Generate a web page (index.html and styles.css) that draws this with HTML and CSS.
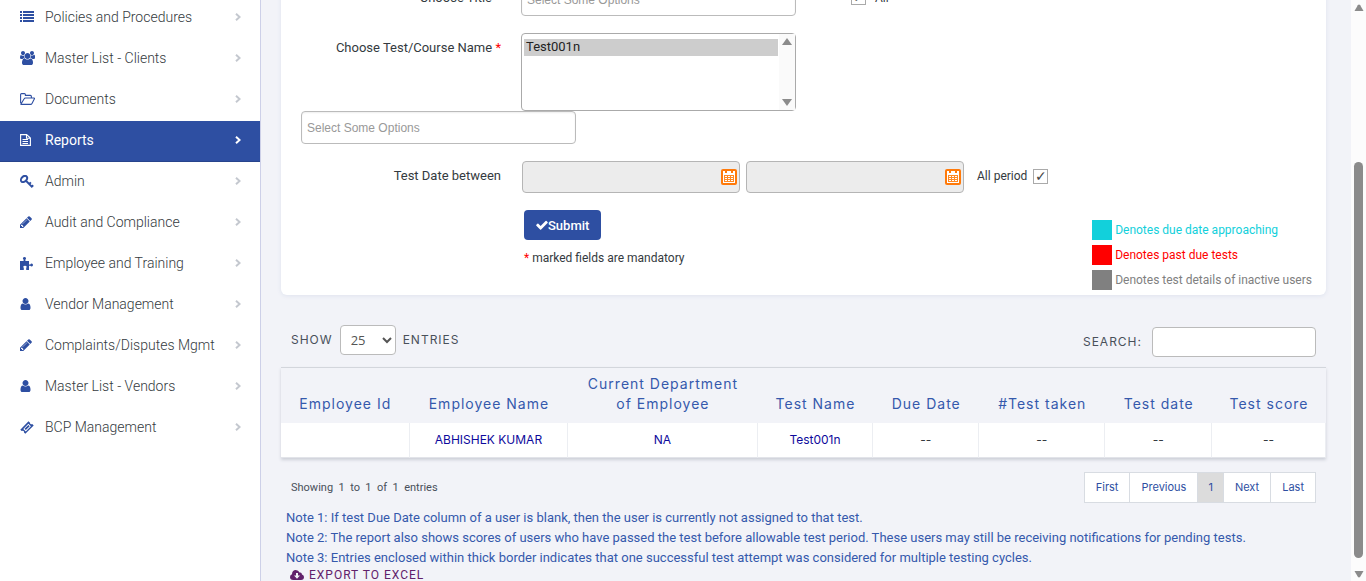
FILE: index.html
```html
<!DOCTYPE html>
<html lang="en">
<head>
<meta charset="utf-8">
<title>Reports</title>
<link rel="stylesheet" href="styles.css">
</head>
<body>
<svg class="sprite" aria-hidden="true">
  <symbol id="chevron" viewBox="0 0 6 8"><path d="M1 .8L4.600 4 1 7.200" fill="none" stroke="currentColor" stroke-width="2"/></symbol>
  <symbol id="pencil" viewBox="128 128 1536 1536"><path d="M491 1536l91-91-235-235-91 91v107h128v128h107zm523-928q0-22-22-22-10 0-17 7l-542 542q-7 7-7 17 0 22 22 22 10 0 17-7l542-542q7-7 7-17zm-54-192l416 416-832 832h-416v-416zm683 96q0 53-37 90l-166 166-416-416 166-165q36-38 90-38 53 0 91 38l235 234q37 39 37 91z"/></symbol>
  <symbol id="user" viewBox="256 128 1280 1536"><path d="M1536 1399q0 109-62.500 187t-150.500 78h-854q-88 0-150.500-78t-62.500-187q0-85 8.500-160.500t31.500-152 58.500-131 94-89 134.500-34.500q131 128 313 128t313-128q76 0 134.500 34.500t94 89 58.500 131 31.500 152 8.500 160.500zm-256-887q0 159-112.500 271.500t-271.500 112.500-271.500-112.500-112.500-271.500 112.500-271.500 271.500-112.500 271.500 112.500 112.500 271.500z"/></symbol>
  <symbol id="calendar" viewBox="0 0 16 16"><rect width="16" height="16" rx="2" fill="#ff7a0a"/><path d="M2 2h2v2h2V2h4v2h2V2h2v12H2z" fill="#fff"/><path d="M3 6h10v7H3z" fill="#ff8a24"/><path d="M4 7h2v1H4zm3 0h2v1H7zm3 0h2v1h-2zM4 9h2v1H4zm3 0h2v1H7zm3 0h2v1h-2zM4 11h2v1H4zm3 0h2v1H7zm3 0h2v1h-2z" fill="#fff"/></symbol>
</svg>
<div class="app">
  <nav class="sidebar">
    <a class="item" href="#"><span class="ico"><svg width="14" height="12" viewBox="0 0 14 12"><path d="M0 0h2v2H0zM3 0h11v2H3zM0 3h2v2H0zM3 3h11v2H3zM0 6h2v2H0zM3 6h11v2H3zM0 9h2v2H0zM3 9h11v2H3z"/></svg></span><span>Policies and Procedures</span><svg class="chev"><use href="#chevron"/></svg></a>
    <a class="item" href="#"><span class="ico"><svg width="15" height="14" viewBox="0 0 1920 1792"><path d="M593 896q-162 5-265 128h-134q-82 0-138-40.500t-56-118.500q0-353 124-353 6 0 43.500 21t97.500 42.500 119 21.500q67 0 133-23-5 37-5 66 0 159 93 286zm1071 637q0 120-73 189.500t-194 69.500h-874q-121 0-194-69.500t-73-189.500q0-53 3.500-103.500t14-109 26.500-108.500 43-97.500 62-81 85.500-53.500 111.500-20q10 0 43 21.500t73 48 107 48 135 21.500 135-21.500 107-48 73-48 43-21.500q61 0 111.500 20t85.500 53.500 62 81 43 97.500 26.500 108.500 14 109 3.500 103.500zm-1024-1277q0 106-75 181t-181 75-181-75-75-181 75-181 181-75 181 75 75 181zm704 384q0 159-112.500 271.500t-271.500 112.500-271.500-112.500-112.500-271.500 112.500-271.500 271.500-112.500 271.500 112.500 112.500 271.500zm576 225q0 78-56 118.500t-138 40.500h-134q-103-123-265-128 93-127 93-286 0-29-5-66 66 23 133 23 59 0 119-21.500t97.500-42.500 43.500-21q124 0 124 353zm-128-609q0 106-75 181t-181 75-181-75-75-181 75-181 181-75 181 75 75 181z"/></svg></span><span>Master List - Clients</span><svg class="chev"><use href="#chevron"/></svg></a>
    <a class="item" href="#"><span class="ico"><svg width="15" height="12" viewBox="0 0 15 12"><path d="M.6 10V1.600q0-1 1-1h2.800q1 0 1 1v.8h5q1 0 1 1V5M1 11l3-5q.5-1 1.500-1H14q.8 0 .3.900L12 10.400q-.5 1-1.500 1H1.600q-1 0-1-1" fill="none" stroke="currentColor" stroke-width="1.100"/></svg></span><span>Documents</span><svg class="chev"><use href="#chevron"/></svg></a>
    <a class="item active" href="#"><span class="ico"><svg width="11" height="12" viewBox="0 0 11 12"><path d="M.6.600h6L10.400 4v7.400H.6zM6.500.600V4.200h3.900M2.500 5.500h5.500M2.500 7.500h5.500M2.500 9.500h5.500" fill="none" stroke="currentColor" stroke-width="1.100"/></svg></span><span>Reports</span><svg class="chev"><use href="#chevron"/></svg></a>
    <a class="item" href="#"><span class="ico"><svg width="14" height="13" viewBox="0 0 14 13"><path d="M6.200 6l5.600 5.600 1.400-1.300M9.200 9l1.700-1.700" fill="none" stroke="currentColor" stroke-width="1.900"/><ellipse cx="4" cy="4" rx="3.600" ry="2.500" transform="rotate(-45 4 4)" fill="none" stroke="currentColor" stroke-width="1.900"/></svg></span><span>Admin</span><svg class="chev"><use href="#chevron"/></svg></a>
    <a class="item" href="#"><span class="ico"><svg width="12" height="12"><use href="#pencil"/></svg></span><span>Audit and Compliance</span><svg class="chev"><use href="#chevron"/></svg></a>
    <a class="item" href="#"><span class="ico"><svg width="13" height="13" viewBox="0 0 13 13"><path d="M0 4h3.600V2.600Q2.800 2 2.900 1.200 3.200 0 4.500 0T6 1.200Q6.200 2 5.400 2.600V4H9v3.400h1.300q.5-.8 1.400-.8 1.300.2 1.300 1.500t-1.300 1.500q-.9 0-1.400-.8H9V13H6.200v-2.200q.6-.5.4-1.200-.3-.8-1.600-.8t-1.700.8q-.2.700.5 1.200V13H0z"/></svg></span><span>Employee and Training</span><svg class="chev"><use href="#chevron"/></svg></a>
    <a class="item" href="#"><span class="ico"><svg width="11" height="12"><use href="#user"/></svg></span><span>Vendor Management</span><svg class="chev"><use href="#chevron"/></svg></a>
    <a class="item" href="#"><span class="ico"><svg width="12" height="12"><use href="#pencil"/></svg></span><span>Complaints/Disputes Mgmt</span><svg class="chev"><use href="#chevron"/></svg></a>
    <a class="item" href="#"><span class="ico"><svg width="11" height="12"><use href="#user"/></svg></span><span>Master List - Vendors</span><svg class="chev"><use href="#chevron"/></svg></a>
    <a class="item" href="#"><span class="ico"><svg width="14" height="13" viewBox="0 0 14 13"><path fill-rule="evenodd" d="M8.500.3L10 1.700Q9.900 3 11 3.200q.8.100 1.200-.2L13.700 4.500 5.300 12.700 4 11.400Q4.300 10 3 9.800q-.8-.1-1.300.3L.3 8.700zM8.400 2.800L3.300 7.900l2.500 2.500 5.100-5.100zM8.400 3.900l1.300 1.300-3.900 3.900-1.300-1.300z"/></svg></span><span>BCP Management</span><svg class="chev"><use href="#chevron"/></svg></a>
  </nav>
  <main class="content">
    <form class="panel" onsubmit="return false">
      <div class="row">
        <label class="label titled" for="title">Choose Title</label>
        <input class="box" id="title" type="text" placeholder="Select Some Options">
        <label class="all"><input class="tick" type="checkbox" checked> All</label>
      </div>
      <div class="row tests">
        <label class="label" for="test">Choose Test/Course Name <span class="req">*</span></label>
        <div class="list-wrap">
          <select class="list" id="test" multiple><option selected>Test001n</option></select>
          <div class="list-bar"><svg width="10" height="8" viewBox="0 0 10 8"><path d="M5 0l5 7H0z"/></svg><svg width="10" height="8" viewBox="0 0 10 8"><path d="M5 8l5-7H0z"/></svg></div>
        </div>
      </div>
      <input class="box" type="text" placeholder="Select Some Options" aria-label="Selected tests">
      <div class="row dates">
        <label class="label" for="from">Test Date between</label>
        <div class="date"><input id="from" type="text" disabled><svg><use href="#calendar"/></svg></div>
        <div class="date"><input type="text" disabled aria-label="End date"><svg><use href="#calendar"/></svg></div>
        <label class="period">All period <input class="tick" type="checkbox" checked></label>
      </div>
      <div class="bottom">
        <div class="actions">
          <button class="submit" type="submit"><svg width="12" height="12" viewBox="100 250 1600 1300"><path d="M1671 566q0 40-28 68l-724 724-136 136q-28 28-68 28t-68-28l-136-136-362-362q-28-28-28-68t28-68l136-136q28-28 68-28t68 28l294 295 656-657q28-28 68-28t68 28l136 136q28 28 28 68z"/></svg>Submit</button>
          <div class="hint"><span class="req">*</span> marked fields are mandatory</div>
        </div>
        <ul class="legend">
          <li class="near">Denotes due date approaching</li>
          <li class="past">Denotes past due tests</li>
          <li class="inactive">Denotes test details of inactive users</li>
        </ul>
      </div>
    </form>
    <div class="tools">
      <label class="length">SHOW <select><option>25</option></select> ENTRIES</label>
      <label class="search">SEARCH: <input type="text"></label>
    </div>
    <table class="grid">
      <colgroup><col class="c-id"><col class="c-name"><col class="c-dept"><col class="c-test"><col class="c-due"><col class="c-taken"><col class="c-date"><col class="c-score"></colgroup>
      <thead><tr><th>Employee Id</th><th>Employee Name</th><th>Current Department<br>of Employee</th><th>Test Name</th><th>Due Date</th><th>#Test taken</th><th>Test date</th><th>Test score</th></tr></thead>
      <tbody><tr><td></td><td><a href="#">ABHISHEK KUMAR</a></td><td><a href="#">NA</a></td><td><a href="#">Test001n</a></td><td>--</td><td>--</td><td>--</td><td>--</td></tr></tbody>
    </table>
    <div class="foot">
      <div class="info">Showing&nbsp; 1&nbsp; to&nbsp; 1&nbsp; of&nbsp; 1&nbsp; entries</div>
      <nav class="pages"><a href="#">First</a><a href="#">Previous</a><a class="current" href="#">1</a><a href="#">Next</a><a href="#">Last</a></nav>
    </div>
    <div class="notes">
      <p>Note 1: If test Due Date column of a user is blank, then the user is currently not assigned to that test.</p>
      <p>Note 2: The report also shows scores of users who have passed the test before allowable test period. These users may still be receiving notifications for pending tests.</p>
      <p>Note 3: Entries enclosed within thick border indicates that one successful test attempt was considered for multiple testing cycles.</p>
    </div>
    <a class="export" href="#"><svg width="14" height="10" viewBox="0 0 14 10"><path fill-rule="evenodd" d="M3.200 10Q0 9.800 0 7q0-2 2-2.800Q2 .2 5.800 0 8.500 0 9.500 2.500 11.800 2 12 4.500q2 .7 2 2.500 0 2.800-3 3zM6 3v2.500H4L7 8.700l3-3.200H8V3z"/></svg>EXPORT TO EXCEL</a>
  </main>
  <div class="scrollbar">
    <svg width="10" height="8" viewBox="0 0 10 8"><path d="M5 .5q.7 0 1.200.8L9.500 7h-9l3.300-5.700Q4.300.5 5 .5z"/></svg>
    <div class="thumb"></div>
    <svg width="10" height="8" viewBox="0 0 10 8"><path d="M5 7.500q-.7 0-1.200-.8L.5 1h9L6.200 6.700Q5.700 7.500 5 7.500z"/></svg>
  </div>
</div>
</body>
</html>
```
FILE: styles.css
```css
* { box-sizing: border-box; }
body { margin: 0; background: #f2f3f8; color: #343a40; font: 12px/20px Roboto, sans-serif; }
a { text-decoration: none; }
svg { fill: currentColor; flex: none; }
.sprite { display: none; }
.app { display: flex; height: 100vh; overflow: hidden; }

.sidebar { flex: none; width: 261px; margin-top: -2px; background: #fff; border-right: 1px solid #cdd0e8; }
.item { display: flex; align-items: center; height: 41px; padding: 0 19px 3px 20px; color: #343a40; font-size: 14px; font-weight: 300; }
.ico { display: flex; width: 25px; color: #2e4fa2; }
.chev { width: 6px; height: 8px; margin-left: auto; color: #c4c8cf; }
.item.active { padding-bottom: 2px; background: #2e4fa2; color: #fff; border-bottom: 1px solid #27448c; font-weight: 400; }
.item.active .ico, .item.active .chev { color: #fff; }

.content { flex: 1; min-width: 0; padding: 0 25px 0 20px; }
.panel { margin-top: -17px; padding: 0 14px 5px 20px; background: #fff; border-radius: 0 0 6px 6px; box-shadow: 0 1px 4px #dfe3ef; }
.row { display: flex; }
.label { width: 200px; margin-right: 20px; padding-top: 5px; text-align: right; font-size: 13px; }
.label.titled { padding-right: 9px; }
.req { color: #f00; }
.box { width: 275px; height: 33px; padding: 0 5px; border: 1px solid #bbb; border-radius: 4px; background: #fff; box-shadow: inset 0 1px 2px #eee; font: 12px "Liberation Sans", Arial, sans-serif; }
.box::placeholder { color: #999; }
.all { display: flex; gap: 9px; align-items: center; height: 29px; margin-left: 55px; }
.tests { margin-top: 17px; }
.list-wrap { position: relative; width: 275px; height: 78px; }
.list { display: block; width: 100%; height: 100%; padding: 5px 17px 0 2px; border: 1px solid #aaa; border-radius: 4px; background: #fff; overflow: hidden; font: 13px/17px Roboto, sans-serif; }
.list option { min-height: 17px; padding: 0 2px; background: #cdcdcd; color: #222; }
.list-bar { position: absolute; top: 1px; right: 1px; bottom: 1px; width: 16px; padding: 4px 3px; display: flex; flex-direction: column; justify-content: space-between; background: #fafafa; color: #8b8b8b; }
.dates { margin-top: 17px; }
.dates .label { margin-right: 21px; }
.date { position: relative; width: 218px; margin-right: 6px; }
.date input { display: block; width: 100%; height: 32px; border: 1px solid #b5b5b5; border-radius: 4px; background: #ececec; }
.date svg { position: absolute; top: 8px; right: 3px; width: 16px; height: 16px; }
.period { display: flex; gap: 6px; align-items: center; height: 30px; margin-left: 7px; }
.tick { appearance: none; width: 15px; height: 15px; margin: 0; border: 1px solid #aaa; background: #fff; color: #444; font: bold 14px/13px "DejaVu Sans", sans-serif; text-align: center; }
.tick:checked::after { content: "✓"; }
.bottom { display: flex; justify-content: space-between; margin-top: 17px; }
.actions { padding-left: 223px; }
.submit { display: flex; align-items: center; height: 30px; padding: 0 12px; border: 0; border-radius: 4px; background: #2e4fa2; color: #fff; font: 500 13px Roboto, sans-serif; }
.hint { margin-top: 8px; }
.legend { display: flex; flex-direction: column; gap: 5px; margin: 10px 0 0; padding: 0; list-style: none; }
.legend li { display: flex; gap: 3px; }
.legend li::before { content: ""; width: 20px; height: 20px; background: currentColor; }
.near { color: #12d0db; }
.past { color: #f00; }
.inactive { color: #808080; }

.tools { display: flex; justify-content: space-between; align-items: center; height: 72px; padding: 20px 10px 0; font: 12px/20px Inter, sans-serif; letter-spacing: 1px; color: #49505a; }
.tools label { display: flex; align-items: center; gap: 7px; }
.tools .length { padding-bottom: 2px; }
.tools .search { gap: 10px; padding-top: 2px; }
.tools select { width: 56px; height: 30px; padding: 0 0 0 6px; border: 1px solid #bbb; border-radius: 4px; background: #fff; color: #555; font: 13px "Open Sans", sans-serif; }
.tools input { width: 164px; height: 30px; border: 1px solid #bbb; border-radius: 4px; }

.grid { width: 100%; table-layout: fixed; border-collapse: separate; border-spacing: 0; border-top: 1px solid #d3d6dc; box-shadow: 0 2px 3px #cdd0d8; background: #fff; text-align: center; font: 12px/20px Inter, sans-serif; }
.c-id { width: 12.300%; } .c-name { width: 15.200%; } .c-dept { width: 18.100%; } .c-test { width: 11.100%; }
.c-due { width: 10.100%; } .c-taken { width: 12.100%; } .c-date { width: 10.200%; } .c-score { width: 10.900%; }
.grid th { padding: 6px 0 9px; background: #f2f3f8; color: #3559ac; font-size: 14px; font-weight: 400; letter-spacing: 1px; vertical-align: bottom; white-space: nowrap; }
.grid td { height: 35px; padding: 0; border-right: 1px solid #eceef2; border-bottom: 1px solid #e2e4e9; }
.grid a { color: #0e0a9c; }
.foot { display: flex; justify-content: space-between; align-items: center; padding: 14px 10px 0; font-size: 11px; }
.info { color: #49505a; }
.pages { display: flex; border: solid #d8dce2; border-width: 1px 0 1px 1px; background: #fff; }
.pages a { height: 29px; padding: 0 11px; border-right: 1px solid #d8dce2; color: #2e4fa2; font: 11px/29px Inter, sans-serif; }
.pages .current { padding: 0 10px; background: #dcdcdc; }
.notes { padding: 5px 5px 0; color: #3559ac; font: 13px/20px Roboto, sans-serif; white-space: nowrap; }
.notes p { margin: 0; }
.export { display: flex; align-items: center; gap: 5px; height: 13px; padding-left: 9px; color: #61216b; font-size: 12px; letter-spacing: 1px; }

.scrollbar { flex: none; display: flex; flex-direction: column; align-items: center; width: 15px; padding: 4px 0 3px; background: #fcfcfc; color: #8b8b8b; }
.thumb { width: 9px; height: 396px; margin: auto 0 12px; border-radius: 5px; background: #8b8b8b; }
```
